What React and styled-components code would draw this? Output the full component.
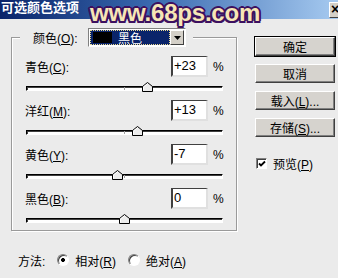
import React from "react";
import styled, { createGlobalStyle } from "styled-components";

const channels = [
  { name: "青色", key: "C", value: "+23", pos: 23 },
  { name: "洋红", key: "M", value: "+13", pos: 13 },
  { name: "黄色", key: "Y", value: "-7", pos: -7 },
  { name: "黑色", key: "B", value: "0", pos: 0 },
];

const buttons = [
  { label: "确定", primary: true },
  { label: "取消", gap: 8 },
  { label: "载入(", key: "L", tail: ")...", gap: 8 },
  { label: "存储(", key: "S", tail: ")...", gap: 8 },
];

function App() {
  return (
    <Window>
      <GlobalStyle />
      <TitleBar>
        <Title>可选颜色选项</Title>
        <Watermark>www.68ps.com</Watermark>
        <Close>×</Close>
      </TitleBar>
      <Body>
        <Left>
          <Group>
            <Legend>
              <LegendLabel>
                颜色(<u>O</u>):
              </LegendLabel>
              <Select>
                <SelectValue>
                  <Swatch />
                  <SelectText>黑色</SelectText>
                </SelectValue>
                <SelectArrow>
                  <svg width="7" height="4" viewBox="0 0 7 4">
                    <path d="M0 0h7L3.5 4z" fill="#000" />
                  </svg>
                </SelectArrow>
              </Select>
            </Legend>
            {channels.map((c) => (
              <Channel key={c.key}>
                <LabelRow>
                  <Label>
                    {c.name}(<u>{c.key}</u>):
                  </Label>
                  <Input>{c.value}</Input>
                  <Percent>%</Percent>
                </LabelRow>
                <Slider>
                  <Track />
                  <Thumb $pos={c.pos}>
                    <svg width="11" height="10" viewBox="0 0 11 10">
                      <path
                        d="M0.5 9.5V4.5L5.5 0.5L10.5 4.5V9.5Z"
                        fill="#ececec"
                        stroke="#000"
                      />
                      <path d="M1.5 8.5V5L5.5 1.8" fill="none" stroke="#fff" />
                    </svg>
                  </Thumb>
                </Slider>
              </Channel>
            ))}
          </Group>
          <MethodRow>
            <span>方法:</span>
            <Option>
              <Radio $checked />
              <span>
                相对(<u>R</u>)
              </span>
            </Option>
            <Option>
              <Radio />
              <span>
                绝对(<u>A</u>)
              </span>
            </Option>
          </MethodRow>
        </Left>
        <Right>
          {buttons.map((b) => (
            <Button key={b.label} $primary={b.primary} $gap={b.gap}>
              <span>
                {b.label}
                {b.key && <u>{b.key}</u>}
                {b.tail}
              </span>
            </Button>
          ))}
          <CheckRow>
            <Checkbox>
              <svg width="8" height="8" viewBox="0 0 8 8">
                <path d="M1 3.5L3 5.5L7 1.5" fill="none" stroke="#000" strokeWidth="1.8" />
              </svg>
            </Checkbox>
            <span>
              预览(<u>P</u>)
            </span>
          </CheckRow>
        </Right>
      </Body>
    </Window>
  );
}

const GlobalStyle = createGlobalStyle`
  body {
    margin: 0;
    background: #ebebeb;
    font-family: "Liberation Sans", "Noto Sans CJK SC", sans-serif;
    font-size: 12px;
    color: #000;
  }
  u {
    text-decoration: underline;
    text-underline-offset: 1px;
  }
`;

const Window = styled.div`
  width: 338px;
  height: 278px;
  overflow: hidden;
  display: flex;
  flex-direction: column;
  background: #ebebeb;
`;

const TitleBar = styled.div`
  position: relative;
  height: 19px;
  flex: none;
  display: flex;
  align-items: center;
  background: linear-gradient(90deg, #0a246a 0%, #3a6ab0 45%, #a6caf0 100%);
`;

const Title = styled.div`
  color: #fff;
  font-weight: bold;
  font-size: 13px;
  padding-left: 1px;
  line-height: 1;
  margin-top: -4px;
`;

const Watermark = styled.div`
  position: absolute;
  left: 90px;
  top: 1px;
  font-family: "Liberation Sans", sans-serif;
  font-weight: bold;
  font-size: 24px;
  line-height: 24px;
  letter-spacing: -0.2px;
  color: #f6e6b6;
  text-shadow: 2px 0 0 #3c1060, -2px 0 0 #3c1060, 0 2px 0 #3c1060,
    0 -2px 0 #3c1060, 1.5px 1.5px 0 #3c1060, -1.5px -1.5px 0 #3c1060,
    1.5px -1.5px 0 #3c1060, -1.5px 1.5px 0 #3c1060;
  z-index: 2;
`;

const Close = styled.div`
  position: absolute;
  left: 329px;
  top: 2px;
  width: 16px;
  height: 14px;
  background: #d4d0c8;
  border: 1px solid;
  border-color: #fff #404040 #404040 #fff;
  font-size: 14px;
  font-weight: bold;
  line-height: 13px;
  padding-left: 1px;
`;

const Body = styled.div`
  display: flex;
  flex: 1;
`;

const Left = styled.div`
  padding: 9px 0 0 11px;
  width: 226px;
`;

const Group = styled.fieldset`
  margin: 0;
  box-sizing: border-box;
  width: 226px;
  height: 203px;
  padding: 9px 12px 0 13px;
  border: 1px solid #9a9a9a;
  box-shadow: 1px 1px 0 #fff, inset 1px 1px 0 #fff;
`;

const Legend = styled.legend`
  display: flex;
  align-items: center;
  margin-left: -5px;
  padding: 0 7px 0 0;
  height: 19px;
  background: #ebebeb;
`;

const LegendLabel = styled.span`
  margin-left: 13px;
  width: 55px;
`;

const Select = styled.div`
  display: flex;
  width: 98px;
  height: 19px;
  box-sizing: border-box;
  border: 1px solid;
  border-color: #808080 #fff #fff #808080;
  background: #fff;
  padding: 1px;
`;

const SelectValue = styled.div`
  flex: 1;
  display: flex;
  align-items: center;
  justify-content: flex-start;
  background: #0a246a;
  color: #fff;
  outline: 1px dotted #e8d890;
  outline-offset: -1px;
  padding-left: 3px;
`;

const Swatch = styled.span`
  flex: none;
  width: 19px;
  height: 11px;
  margin-right: 6px;
  background: #000;
`;

const SelectText = styled.span`
  flex: none;
`;

const SelectArrow = styled.div`
  width: 14px;
  display: flex;
  align-items: center;
  justify-content: center;
  box-sizing: border-box;
  background: #d4d0c8;
  border: 1px solid;
  border-color: #fff #404040 #404040 #fff;
`;

const Channel = styled.div`
  margin-bottom: 6px;
`;

const LabelRow = styled.div`
  display: flex;
  align-items: center;
  height: 21px;
`;

const Label = styled.span`
  flex: 1;
`;

const Input = styled.div`
  width: 37px;
  height: 21px;
  box-sizing: border-box;
  background: #fff;
  border: 2px solid;
  border-color: #404040 #e0e0e0 #e0e0e0 #404040;
  border-top-width: 1px;
  font-size: 13px;
  line-height: 18px;
  padding-left: 1px;
`;

const Percent = styled.span`
  margin-left: 5px;
  width: 11px;
`;

const Slider = styled.div`
  position: relative;
  height: 12px;
  margin: 5px 0 0 1px;
  width: 197px;
`;

const Track = styled.div`
  position: absolute;
  left: 0;
  right: 0;
  top: 4px;
  height: 5px;
  box-sizing: border-box;
  border: 1px solid;
  border-color: #000 #fff #fff #000;
  background: #fff;
  box-shadow: inset 1px 1px 0 #404040;

  &::after {
    content: "";
    position: absolute;
    left: 97px;
    top: 0;
    width: 1px;
    height: 3px;
    background: #a0a0a0;
  }
`;

const Thumb = styled.div`
  position: absolute;
  top: 0;
  left: ${(p) => ((p.$pos + 100) / 200) * 196 - 5}px;
  width: 11px;
  height: 10px;
  display: flex;
`;

const MethodRow = styled.div`
  display: flex;
  align-items: center;
  gap: 12px;
  margin: 22px 0 0 7px;
  height: 14px;
`;

const Option = styled.label`
  display: flex;
  align-items: center;
  gap: 6px;
`;

const Radio = styled.span`
  width: 12px;
  height: 12px;
  box-sizing: border-box;
  border-radius: 50%;
  border: 1px solid;
  border-color: #808080 #fff #fff #808080;
  background: radial-gradient(
    circle,
    ${(p) => (p.$checked ? "#000 0 1.8px, #fff 2.2px" : "#fff 0")}
  );
  box-shadow: inset 1px 1px 0 #404040;
`;

const Right = styled.div`
  display: flex;
  flex-direction: column;
  padding: 18px 0 0 18px;
`;

const Button = styled.div`
  width: 80px;
  height: 19px;
  box-sizing: border-box;
  margin-top: ${(p) => p.$gap || 0}px;
  display: flex;
  align-items: center;
  justify-content: center;
  background: #d6d3ce;
  border: 1px solid;
  border-color: #fff #404040 #404040 #fff;
  box-shadow: ${(p) =>
    p.$primary ? "0 0 0 1px #000, inset -1px -1px 0 #808080" : "inset -1px -1px 0 #808080"};
`;

const CheckRow = styled.label`
  display: flex;
  align-items: center;
  gap: 6px;
  margin-top: 18px;
  padding-left: 1px;
`;

const Checkbox = styled.span`
  width: 11px;
  height: 11px;
  box-sizing: border-box;
  display: flex;
  align-items: center;
  justify-content: center;
  background: #fff;
  border: 1px solid;
  border-color: #808080 #fff #fff #808080;
  box-shadow: inset 1px 1px 0 #404040;
`;

export default App;
